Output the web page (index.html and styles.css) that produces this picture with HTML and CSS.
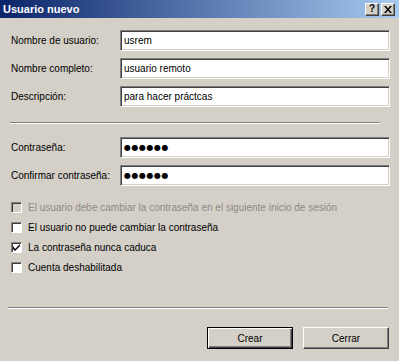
FILE: index.html
```html
<!DOCTYPE html>
<html lang="es">
  <head>
    <meta charset="utf-8" />
    <title>Usuario nuevo</title>
    <link rel="stylesheet" href="styles.css">
  </head>
  <body>
    <div class="dialog">
      <div class="titlebar">
        <span class="title">Usuario nuevo</span>
        <div class="caption-buttons">
          <span class="cap-btn help">?</span>
          <span class="cap-btn close">
            <svg width="8" height="7" viewBox="0 0 8 7">
              <path d="M0 0h2l2 2.5L6 0h2L5 3.5 8 7H6L4 4.5 2 7H0l3-3.5z" fill="#000"/>
            </svg>
          </span>
        </div>
      </div>

      <div class="content">
        <div class="fields">
          <label>Nombre de usuario:</label>
          <div class="edit">usrem</div>
          <label>Nombre completo:</label>
          <div class="edit">usuario remoto</div>
          <label>Descripción:</label>
          <div class="edit">para hacer práctcas</div>
        </div>

        <div class="separator sep-top"></div>

        <div class="fields pw">
          <label>Contraseña:</label>
          <div class="edit dots">&#9679;&#9679;&#9679;&#9679;&#9679;&#9679;</div>
          <label>Confirmar contraseña:</label>
          <div class="edit dots">&#9679;&#9679;&#9679;&#9679;&#9679;&#9679;</div>
        </div>

        <ul class="checks">
          <li class="disabled"><span class="box"></span>El usuario debe cambiar la contraseña en el siguiente inicio de sesión</li>
          <li><span class="box"></span>El usuario no puede cambiar la contraseña</li>
          <li>
            <span class="box">
              <svg width="7" height="7" viewBox="0 0 7 7">
                <path d="M0 2v3l2 2 5-5V-0L2 5z" fill="#000"/>
              </svg>
            </span>La contraseña nunca caduca
          </li>
          <li><span class="box"></span>Cuenta deshabilitada</li>
        </ul>

        <div class="separator sep-bottom"></div>

        <div class="actions">
          <button class="btn default">Crear</button>
          <button class="btn">Cerrar</button>
        </div>
      </div>
    </div>
  </body>
</html>
```

FILE: styles.css
```css
html {
  height: 100%;
}
body {
  margin: 0;
  padding: 0;
  background: #d4d0c8;
  color: #000;
  font-family: "Liberation Sans", Arial, sans-serif;
  font-size: 10px;
}

.dialog {
  width: 400px;
  height: 361px;
  overflow: hidden;
  box-sizing: border-box;
  border-right: 1px solid #fff;
}

/* title bar */
.titlebar {
  height: 18px;
  display: flex;
  align-items: center;
  justify-content: space-between;
  padding: 0 4px 0 3px;
  background: linear-gradient(to right, #0a246a, #a6caf0);
}
.title {
  color: #fff;
  font-weight: bold;
  font-size: 11px;
}
.caption-buttons {
  display: flex;
  gap: 2px;
}
.cap-btn {
  width: 14px;
  height: 13px;
  box-sizing: border-box;
  background: #d4d0c8;
  border-top: 1px solid #fff;
  border-left: 1px solid #fff;
  border-right: 1px solid #404040;
  border-bottom: 1px solid #404040;
  box-shadow: inset -1px -1px 0 #808080;
  display: flex;
  align-items: center;
  justify-content: center;
  font-weight: bold;
  font-size: 10px;
  line-height: 1;
}

/* form */
.content {
  padding: 12px 10px 0 11px;
}
.fields {
  display: grid;
  grid-template-columns: 109px 270px;
  row-gap: 7px;
  align-items: center;
}
.edit {
  height: 21px;
  box-sizing: border-box;
  background: #fff;
  border-top: 1px solid #808080;
  border-left: 1px solid #808080;
  border-right: 1px solid #fff;
  border-bottom: 1px solid #fff;
  box-shadow: inset 1px 1px 0 #404040, inset -1px -1px 0 #d4d0c8;
  padding: 0 3px;
  line-height: 19px;
  white-space: nowrap;
}
.edit.dots {
  font-family: "DejaVu Sans", sans-serif;
  font-size: 8px;
  letter-spacing: 0.5px;
}

.separator {
  height: 0;
  border-top: 1px solid #808080;
  border-bottom: 1px solid #fff;
}
.sep-top {
  margin: 15px 0 13px -1px;
  width: 370px;
}
.pw {
  row-gap: 7px;
}

.checks {
  list-style: none;
  margin: 11px 0 0;
  padding: 0;
}
.checks li {
  height: 20px;
  display: flex;
  align-items: center;
  gap: 6px;
}
.checks li.disabled {
  color: #8c8a85;
}
.box {
  width: 11px;
  height: 11px;
  box-sizing: border-box;
  background: #fff;
  border-top: 1px solid #808080;
  border-left: 1px solid #808080;
  border-right: 1px solid #fff;
  border-bottom: 1px solid #fff;
  box-shadow: inset 1px 1px 0 #404040;
  display: flex;
  align-items: center;
  justify-content: center;
}
.disabled .box {
  background: #d4d0c8;
}

.sep-bottom {
  margin: 30px 0 0 -3px;
  width: 380px;
}

.actions {
  display: flex;
  justify-content: flex-end;
  gap: 10px;
  margin-top: 18px;
}
.btn {
  width: 86px;
  height: 22px;
  box-sizing: border-box;
  background: #d4d0c8;
  font-family: "Liberation Sans", Arial, sans-serif;
  font-size: 10px;
  color: #000;
  border-top: 1px solid #fff;
  border-left: 1px solid #fff;
  border-right: 1px solid #404040;
  border-bottom: 1px solid #404040;
  box-shadow: inset -1px -1px 0 #808080;
  padding: 0;
}
.btn.default {
  border: 1px solid #000;
  box-shadow: inset 1px 1px 0 #fff, inset -1px -1px 0 #404040, inset -2px -2px 0 #808080;
}
```
